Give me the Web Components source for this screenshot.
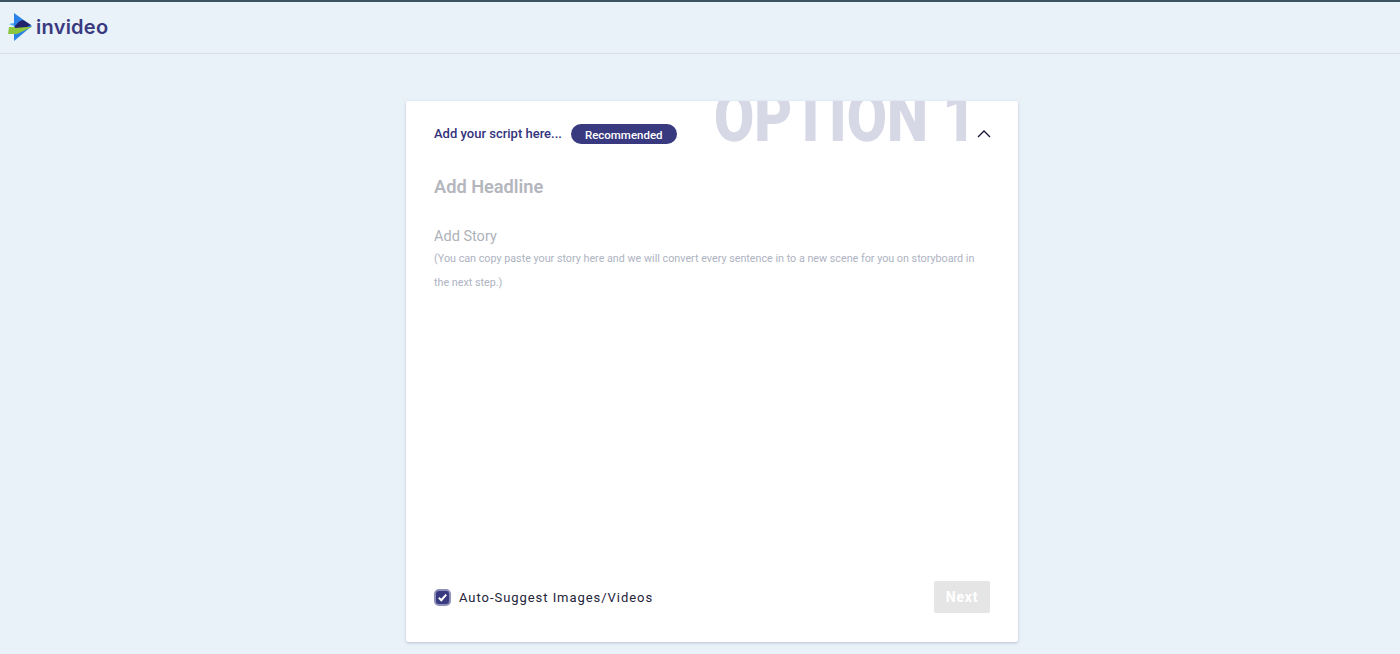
<!DOCTYPE html>
<html>
<head>
<meta charset="utf-8">
<title>invideo</title>
<style>
  html, body { margin: 0; height: 100%; }
  body { background: #e9f1f9; font-family: Roboto, "Liberation Sans", sans-serif; overflow: hidden; }
</style>
</head>
<body>
<app-header></app-header>
<script-card>
  <span slot="title">Add your script here...</span>
  <span slot="badge">Recommended</span>
</script-card>

<script>
class AppHeader extends HTMLElement {
  constructor() {
    super();
    this.attachShadow({ mode: 'open' });
    this.shadowRoot.innerHTML = `
      <style>
        :host {
          display: flex;
          align-items: center;
          box-sizing: border-box;
          height: 54px;
          padding: 0 0 2px 8px;
          border-top: 2px solid #3d5560;
          border-bottom: 1px solid #d9dfe5;
        }
        svg { display: block; margin-right: 4px; }
        span {
          font: 600 20px/1 Inter, sans-serif;
          color: #39397f;
          letter-spacing: .25px;
        }
      </style>
      <svg width="24" height="30" viewBox="0 0 24 30">
        <polygon points="6,1 24,14 6,29" fill="#2b82e6"/>
        <polygon points="1,15 24,15 9,22 0,22" fill="#8cc63f"/>
        <path d="M7,14 C10,10 13,8 15,8 L23,13 L19,15 L7,16 Z" fill="#23236b"/>
        <polygon points="1,12 6,11 6,14" fill="#4aa8ee"/>
      </svg>
      <span>invideo</span>
    `;
  }
}

class ScriptCard extends HTMLElement {
  constructor() {
    super();
    this.attachShadow({ mode: 'open' });
    this.shadowRoot.innerHTML = `
      <style>
        :host {
          display: flex;
          flex-direction: column;
          position: relative;
          overflow: hidden;
          box-sizing: border-box;
          width: 612px;
          height: 541px;
          margin: 47px 0 0 406px;
          padding: 22px 28px 29px;
          background: #fff;
          border-radius: 2px;
          box-shadow: 0 1px 3px rgba(60, 70, 110, .28);
        }
        .watermark {
          position: absolute;
          left: 308px;
          top: -18px;
          font: 900 70px/1 Roboto, sans-serif;
          color: #d7d8e6;
          white-space: nowrap;
          text-rendering: geometricPrecision;
          transform: scaleX(.833);
          transform-origin: left top;
        }
        .top {
          display: flex;
          align-items: center;
          height: 22px;
          position: relative;
        }
        .title { font: 500 13px/24px Roboto, sans-serif; color: #33337c; }
        .badge {
          margin-left: 9px;
          background: #39397f;
          color: #fff;
          font: 500 11.5px/18px Roboto, sans-serif;
          padding: 2px 14px 0;
          border-radius: 10px;
        }
        .chevron { margin: 0 -1px 2px auto; display: block; }
        .headline {
          margin-top: 30px;
          font: 600 18.2px/24px Roboto, sans-serif;
          color: #b4b6bd;
        }
        .story {
          margin-top: 28px;
          font: 400 14.5px/20px Roboto, sans-serif;
          color: #aeb2ba;
        }
        .hint {
          margin-top: 0;
          font: 400 10.76px/24px Roboto, sans-serif;
          color: #aeb3c2;
        }
        .foot {
          margin-top: auto;
          display: flex;
          align-items: center;
          justify-content: space-between;
        }
        .check { display: flex; align-items: center; gap: 8px; }
        .box {
          width: 17px;
          height: 17px;
          box-sizing: border-box;
          background: #39397f;
          border: 2px solid #8d8fb8;
          border-radius: 5px;
        }
        .box svg { display: block; }
        .label {
          font: 400 13px/17px Roboto, sans-serif;
          letter-spacing: .95px;
          color: #23233a;
        }
        .next {
          width: 56px;
          height: 32px;
          background: #e5e5e5;
          border-radius: 2px;
          color: #fff;
          font: 700 14px/33px Roboto, sans-serif;
          letter-spacing: .8px;
          text-align: center;
        }
      </style>
      <div class="watermark">OPTION 1</div>
      <div class="top">
        <span class="title"><slot name="title"></slot></span>
        <span class="badge"><slot name="badge"></slot></span>
        <svg class="chevron" width="14" height="9" viewBox="0 0 14 9">
          <path d="M1 8 L7 2 L13 8" fill="none" stroke="#16163a" stroke-width="1.3"/>
        </svg>
      </div>
      <div class="headline">Add Headline</div>
      <div class="story">Add Story</div>
      <div class="hint">(You can copy paste your story here and we will convert every sentence in to a new scene for you on storyboard in the next step.)</div>
      <div class="foot">
        <div class="check">
          <div class="box">
            <svg width="13" height="13" viewBox="0 0 13 13">
              <path d="M2.8 6.8 L5.3 9.2 L10.2 3.6" fill="none" stroke="#fff" stroke-width="2"/>
            </svg>
          </div>
          <span class="label">Auto-Suggest Images/Videos</span>
        </div>
        <div class="next">Next</div>
      </div>
    `;
  }
}

customElements.define('app-header', AppHeader);
customElements.define('script-card', ScriptCard);
</script>
</body>
</html>
